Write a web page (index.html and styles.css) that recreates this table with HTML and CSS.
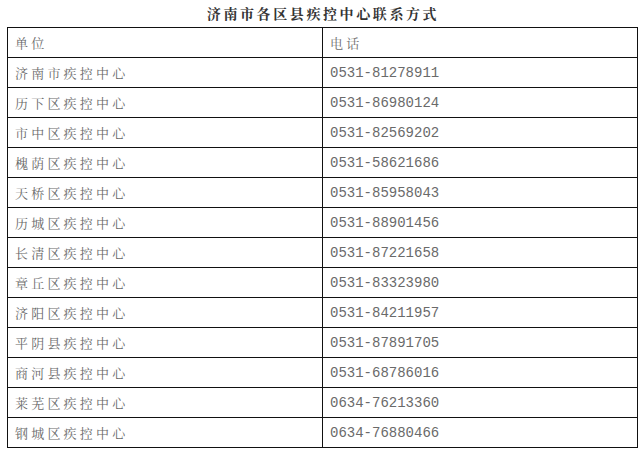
FILE: index.html
```html
<!DOCTYPE html>
<html lang="zh">
<head>
<meta charset="utf-8">
<link rel="stylesheet" href="styles.css">
</head>
<body>
<div class="title">济南市各区县疾控中心联系方式</div>
<table class="contacts">
  <tr><td class="name">单位</td><td class="name">电话</td></tr>
  <tr><td class="name">济南市疾控中心</td><td class="tel">0531-81278911</td></tr>
  <tr><td class="name">历下区疾控中心</td><td class="tel">0531-86980124</td></tr>
  <tr><td class="name">市中区疾控中心</td><td class="tel">0531-82569202</td></tr>
  <tr><td class="name">槐荫区疾控中心</td><td class="tel">0531-58621686</td></tr>
  <tr><td class="name">天桥区疾控中心</td><td class="tel">0531-85958043</td></tr>
  <tr><td class="name">历城区疾控中心</td><td class="tel">0531-88901456</td></tr>
  <tr><td class="name">长清区疾控中心</td><td class="tel">0531-87221658</td></tr>
  <tr><td class="name">章丘区疾控中心</td><td class="tel">0531-83323980</td></tr>
  <tr><td class="name">济阳区疾控中心</td><td class="tel">0531-84211957</td></tr>
  <tr><td class="name">平阴县疾控中心</td><td class="tel">0531-87891705</td></tr>
  <tr><td class="name">商河县疾控中心</td><td class="tel">0531-68786016</td></tr>
  <tr><td class="name">莱芜区疾控中心</td><td class="tel">0634-76213360</td></tr>
  <tr><td class="name">钢城区疾控中心</td><td class="tel">0634-76880466</td></tr>
</table>
</body>
</html>
```
FILE: styles.css
```css
html, body {
  margin: 0;
  padding: 0;
  background: #fff;
}
body {
  width: 643px;
  height: 454px;
  overflow: hidden;
}
.title {
  height: 27px;
  line-height: 26px;
  text-align: center;
  font-family: "Noto Serif CJK SC", "Noto Sans CJK SC", serif;
  font-weight: 700;
  font-size: 14px;
  letter-spacing: 2.6px;
  padding-left: 3px;
  color: #333;
}
.contacts {
  margin-left: 7px;
  width: 631px;
  border-collapse: collapse;
  table-layout: fixed;
}
.contacts td {
  border: 1px solid #111;
  height: 29px;
  padding: 0 0 0 7px;
  vertical-align: middle;
  color: #6a6a6a;
}
.name {
  font-family: "Noto Serif CJK SC", "Noto Sans CJK SC", serif;
  font-size: 13px;
  letter-spacing: 3.2px;
}
.tel {
  font-family: "Liberation Mono", monospace;
  font-size: 14px;
  color: #555;
}
```
